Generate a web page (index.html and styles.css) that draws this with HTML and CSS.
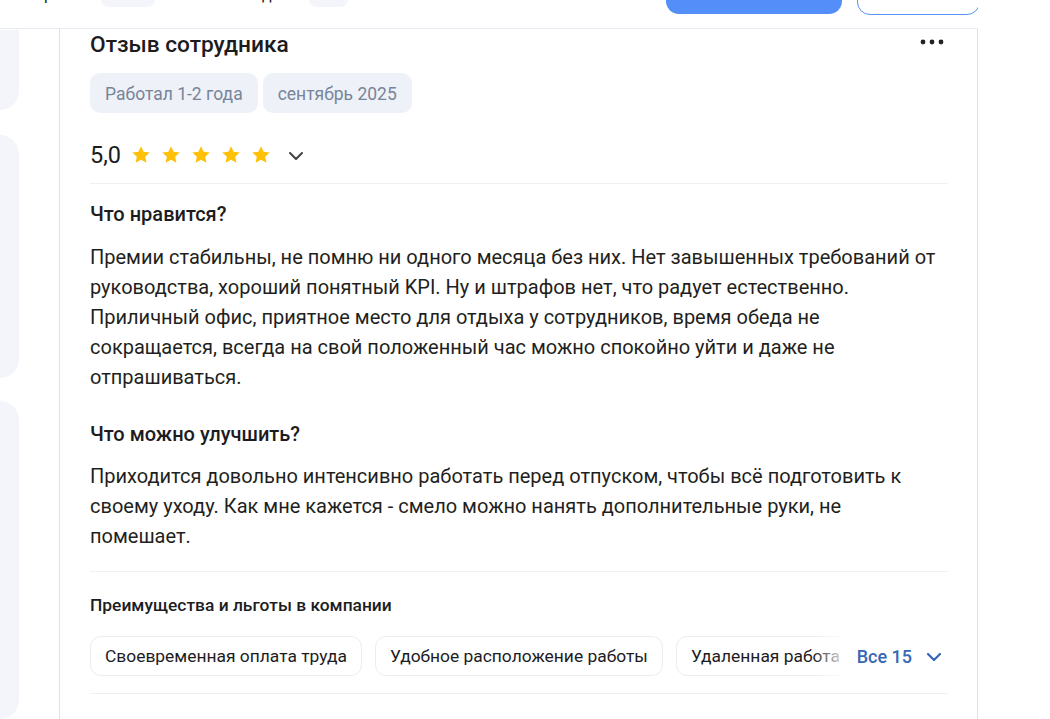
FILE: index.html
```html
<!DOCTYPE html>
<html lang="ru">
<head>
    <meta charset="UTF-8">
    <meta name="viewport" content="width=device-width, initial-scale=1.0">
    <title>Отзыв сотрудника</title>
    <link rel="stylesheet" href="styles.css">
</head>
<body>
    <div class="topbar">
        <div class="topnav">
            <span class="nav-item first">Обзор</span>
            <span class="nav-pill"></span>
            <span class="nav-item second">Льготы и д</span>
            <span class="nav-pill small"></span>
        </div>
        <div class="top-actions">
            <button class="btn-primary"></button>
            <button class="btn-outline"></button>
        </div>
    </div>

    <div class="page">
        <div class="sidebar">
            <div class="side-card one"></div>
            <div class="side-card two"></div>
            <div class="side-card three"></div>
        </div>

        <div class="review">
            <div class="review-head">
                <h2 class="review-title">Отзыв сотрудника</h2>
                <button class="more">
                    <svg width="24" height="6" viewBox="0 0 24 6"><circle cx="3" cy="3" r="2.4"/><circle cx="12" cy="3" r="2.4"/><circle cx="21" cy="3" r="2.4"/></svg>
                </button>
            </div>
            <div class="tags">
                <span class="tag">Работал 1-2 года</span>
                <span class="tag">сентябрь 2025</span>
            </div>

            <div class="rating">
                <span class="score">5,0</span>
                <div class="stars">
                    <svg class="star" viewBox="0 0 24 24"><path d="M12 1.5l3.1 6.7 7.3.8-5.4 5 1.5 7.3L12 17.6l-6.5 3.7L7 14l-5.4-5 7.3-.8z"/></svg>
                    <svg class="star" viewBox="0 0 24 24"><path d="M12 1.5l3.1 6.7 7.3.8-5.4 5 1.5 7.3L12 17.6l-6.5 3.7L7 14l-5.4-5 7.3-.8z"/></svg>
                    <svg class="star" viewBox="0 0 24 24"><path d="M12 1.5l3.1 6.7 7.3.8-5.4 5 1.5 7.3L12 17.6l-6.5 3.7L7 14l-5.4-5 7.3-.8z"/></svg>
                    <svg class="star" viewBox="0 0 24 24"><path d="M12 1.5l3.1 6.7 7.3.8-5.4 5 1.5 7.3L12 17.6l-6.5 3.7L7 14l-5.4-5 7.3-.8z"/></svg>
                    <svg class="star" viewBox="0 0 24 24"><path d="M12 1.5l3.1 6.7 7.3.8-5.4 5 1.5 7.3L12 17.6l-6.5 3.7L7 14l-5.4-5 7.3-.8z"/></svg>
                </div>
                <svg class="chevron" width="14" height="8" viewBox="0 0 14 8"><path d="M1 1l6 6 6-6"/></svg>
            </div>

            <div class="section">
                <h3 class="section-title">Что нравится?</h3>
                <p class="section-text">Премии стабильны, не помню ни одного месяца без них. Нет завышенных требований от руководства, хороший понятный KPI. Ну и штрафов нет, что радует естественно. Приличный офис, приятное место для отдыха у сотрудников, время обеда не сокращается, всегда на свой положенный час можно спокойно уйти и даже не отпрашиваться.</p>

                <h3 class="section-title second">Что можно улучшить?</h3>
                <p class="section-text">Приходится довольно интенсивно работать перед отпуском, чтобы всё подготовить к своему уходу. Как мне кажется - смело можно нанять дополнительные руки, не помешает.</p>
            </div>

            <div class="benefits">
                <h4 class="benefits-title">Преимущества и льготы в компании</h4>
                <div class="benefit-row">
                    <div class="benefit-list">
                        <span class="benefit">Своевременная оплата труда</span>
                        <span class="benefit">Удобное расположение работы</span>
                        <span class="benefit">Удаленная работа</span>
                        <span class="benefit">ДМС</span>
                    </div>
                    <div class="benefit-more">
                        <span class="all-link">Все 15</span>
                        <svg class="chevron blue" width="14" height="8" viewBox="0 0 14 8"><path d="M1 1l6 6 6-6"/></svg>
                    </div>
                </div>
            </div>
        </div>
    </div>
</body>
</html>
```

FILE: styles.css
```css
body {
    margin: 0;
    font-family: Roboto, "Noto Sans", Arial, sans-serif;
    color: #1c1c1e;
    background: #fff;
    overflow: hidden;
}
.topbar {
    width: 978px;
    height: 28px;
    border-bottom: 1px solid #e8eaf2;
    display: flex;
    justify-content: space-between;
    overflow: hidden;
}
.topnav {
    display: flex;
    align-items: flex-start;
    margin-top: -15px;
    height: 22px;
    font-size: 16px;
}
.nav-item.first {
    margin-left: 7px;
}
.nav-pill {
    width: 54px;
    height: 22px;
    background: #f4f5fa;
    border-radius: 8px;
    margin-left: 48px;
}
.nav-pill.small {
    width: 39px;
    margin-left: 37px;
}
.nav-item.second {
    margin-left: 34px;
    color: #1c1c1e;
}
.top-actions {
    display: flex;
    gap: 15px;
    margin-top: -26px;
    margin-right: -2px;
    align-items: flex-start;
}
.btn-primary {
    width: 176px;
    height: 40px;
    border: none;
    border-radius: 13px;
    background: #548ff9;
}
.btn-outline {
    width: 123px;
    height: 41px;
    border: 1px solid #5a92f5;
    border-radius: 13px;
    background: #fff;
}

.page {
    display: flex;
    height: 690px;
}
.sidebar {
    width: 59px;
    display: flex;
    flex-direction: column;
    padding-top: 1px;
}
.side-card {
    width: 19px;
    background: #f4f5fa;
    border-radius: 0 20px 20px 0;
}
.side-card.one {
    height: 81px;
    border-radius: 0 0 20px 0;
}
.side-card.two {
    height: 245px;
    margin-top: 25px;
}
.side-card.three {
    height: 320px;
    margin-top: 23px;
}

.review {
    width: 858px;
    border-left: 1px solid #dfe2ea;
    border-right: 1px solid #dfe2ea;
    padding: 1px 29px 0 30px;
}
.review-head {
    display: flex;
    justify-content: space-between;
    align-items: center;
}
.review-title {
    margin: 0;
    font-size: 22.7px;
    line-height: 30px;
    font-weight: 500;
    color: #1c1c1e;
}
.more {
    border: none;
    background: none;
    padding: 0;
    margin-right: 4px;
    margin-top: -6px;
    display: flex;
}
.more svg {
    fill: #222;
}
.tags {
    display: flex;
    gap: 5px;
    margin-top: 13px;
}
.tag {
    background: #eef1f7;
    color: #77849a;
    font-size: 17.5px;
    line-height: 40px;
    padding: 1px 15px 0;
    height: 39px;
    border-radius: 10px;
}

.rating {
    display: flex;
    align-items: center;
    height: 32px;
    margin-top: 26px;
    padding-bottom: 12px;
    border-bottom: 1px solid #eef0f5;
}
.score {
    font-size: 23.5px;
    font-weight: 400;
    margin-right: 10px;
}
.stars {
    display: flex;
    gap: 10px;
}
.star {
    width: 20px;
    height: 20px;
    fill: #ffc107;
}
.chevron {
    fill: none;
    stroke: #444;
    stroke-width: 2;
    stroke-linecap: round;
    stroke-linejoin: round;
    margin-left: 18px;
    margin-top: 1px;
}

.section {
    padding-bottom: 20px;
    border-bottom: 1px solid #eef0f5;
}
.section-title {
    margin: 18px 0 0;
    font-size: 20px;
    line-height: 24px;
    font-weight: 500;
}
.section-title.second {
    margin-top: 30px;
}
.section-text {
    margin: 16px 0 0;
    font-size: 20px;
    line-height: 30px;
    color: #1f1f21;
    padding-right: 4px;
}
.section-title.second + .section-text {
    margin-top: 15px;
}

.benefits {
    padding: 22px 0 17px;
    border-bottom: 1px solid #eef0f5;
}
.benefits-title {
    margin: 0;
    font-size: 17.4px;
    line-height: 22px;
    font-weight: 500;
}
.benefit-row {
    position: relative;
    margin-top: 20px;
    overflow: hidden;
}
.benefit-list {
    display: flex;
    gap: 13px;
    white-space: nowrap;
}
.benefit {
    border: 1px solid #eaecf1;
    border-radius: 11px;
    padding: 0 14px;
    font-size: 17.4px;
    line-height: 38px;
    color: #1c1c1e;
}
.benefit-more {
    position: absolute;
    right: 0;
    top: 0;
    bottom: 0;
    display: flex;
    align-items: center;
    padding-left: 50px;
    padding-right: 7px;
    background: linear-gradient(to right, rgba(255, 255, 255, 0) 6px, #fff 40px);
}
.all-link {
    color: #3767b5;
    font-size: 18px;
    font-weight: 500;
}
.chevron.blue {
    stroke: #3767b5;
    stroke-width: 2.2;
    margin-left: 15px;
}
```
